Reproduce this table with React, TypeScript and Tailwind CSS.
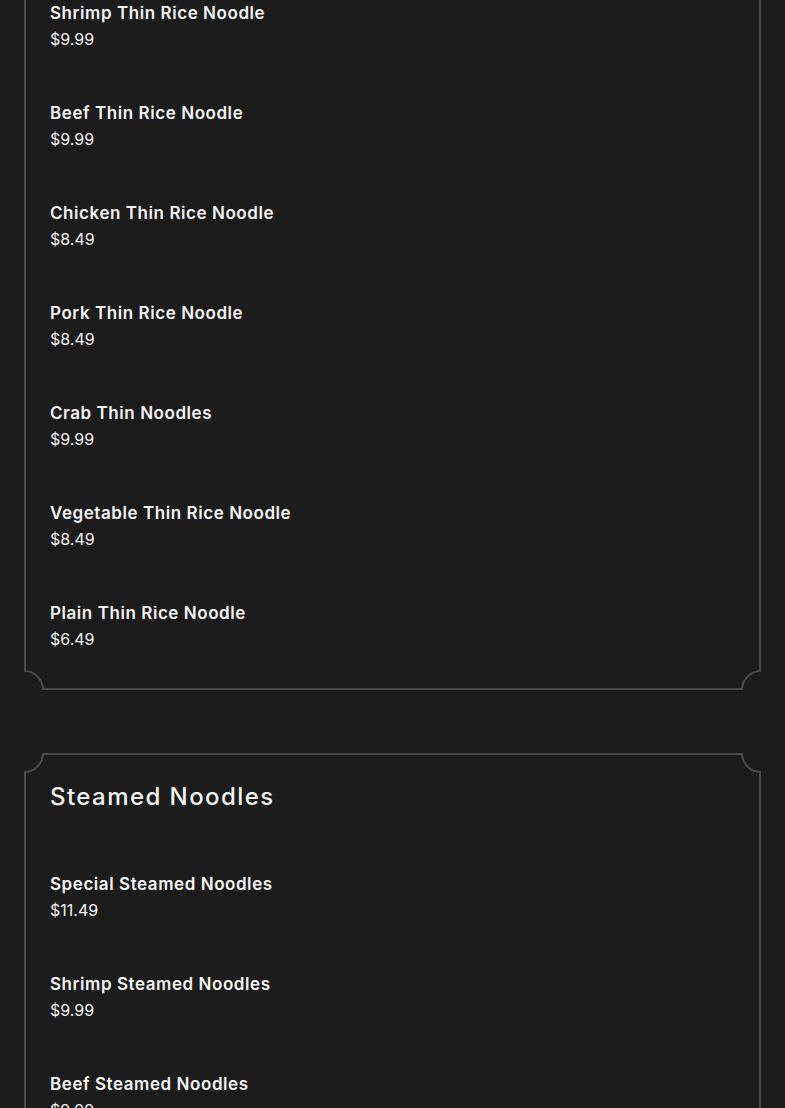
const thinRice = [
  { name: "Shrimp Thin Rice Noodle", price: "$9.99" },
  { name: "Beef Thin Rice Noodle", price: "$9.99" },
  { name: "Chicken Thin Rice Noodle", price: "$8.49" },
  { name: "Pork Thin Rice Noodle", price: "$8.49" },
  { name: "Crab Thin Noodles", price: "$9.99" },
  { name: "Vegetable Thin Rice Noodle", price: "$8.49" },
  { name: "Plain Thin Rice Noodle", price: "$6.49" },
];

const steamed = [
  { name: "Special Steamed Noodles", price: "$11.49" },
  { name: "Shrimp Steamed Noodles", price: "$9.99" },
  { name: "Beef Steamed Noodles", price: "$9.99" },
  { name: "Chicken Steamed Noodles", price: "$8.49" },
];

// concave notch drawn over a box corner
function Notch({ pos }: { pos: "tl" | "tr" | "bl" | "br" }) {
  const wrap = {
    tl: "-left-[2px] -top-[2px]",
    tr: "-right-[2px] -top-[2px]",
    bl: "-left-[2px] -bottom-[2px]",
    br: "-right-[2px] -bottom-[2px]",
  }[pos];
  const circle = {
    tl: "-left-[20px] -top-[20px]",
    tr: "-right-[20px] -top-[20px]",
    bl: "-left-[20px] -bottom-[20px]",
    br: "-right-[20px] -bottom-[20px]",
  }[pos];
  return (
    <span className={`absolute ${wrap} h-[20px] w-[20px] overflow-hidden bg-[#1c1c1c]`}>
      <span className={`absolute ${circle} h-[40px] w-[40px] rounded-full border-2 border-[#4b4b4b]`} />
    </span>
  );
}

function Frame({ className, children }: { className?: string; children: React.ReactNode }) {
  return (
    <div className={`relative border-2 border-[#4b4b4b] px-6 ${className ?? ""}`}>
      <Notch pos="tl" />
      <Notch pos="tr" />
      <Notch pos="bl" />
      <Notch pos="br" />
      {children}
    </div>
  );
}

function Item({ name, price }: { name: string; price: string }) {
  return (
    <div className="flex h-[100px] flex-col gap-[2px]">
      <h3 className="text-[17px] leading-6 font-semibold tracking-[0.033em] text-[#f4f4f4]">{name}</h3>
      <p className="text-[16px] leading-6 text-[#f4f4f4]">{price}</p>
    </div>
  );
}

export default function App() {
  return (
    <div className="h-screen overflow-hidden bg-[#1c1c1c] px-6 font-['Inter',sans-serif]">
      <Frame className="-mt-[41px] pt-[40px] pb-[37px]">
        <div className="flex flex-col">
          {thinRice.map((item, i) => (
            <div key={item.name} className={i === thinRice.length - 1 ? "h-[50px]" : ""}>
              <Item {...item} />
            </div>
          ))}
        </div>
      </Frame>

      <Frame className="mt-[63px] pt-[26px]">
        <h2 className="mb-[59px] text-[24px] leading-8 font-medium tracking-[0.06em] text-[#f4f4f4]">
          Steamed Noodles
        </h2>
        <div className="flex flex-col">
          {steamed.map((item) => (
            <Item key={item.name} {...item} />
          ))}
        </div>
      </Frame>
    </div>
  );
}
